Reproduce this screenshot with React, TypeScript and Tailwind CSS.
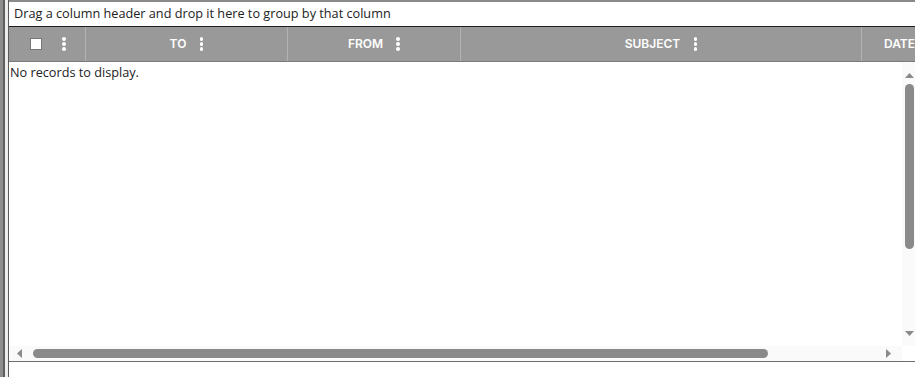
import React from "react";

const Kebab: React.FC = () => (
  <span className="flex flex-col items-center justify-center gap-[1.5px] w-[4px]">
    <span className="w-[3.5px] h-[3.5px] rounded-full bg-white" />
    <span className="w-[3.5px] h-[3.5px] rounded-full bg-white" />
    <span className="w-[3.5px] h-[3.5px] rounded-full bg-white" />
  </span>
);

const columns = [
  { label: "TO", width: "w-[202px]" },
  { label: "FROM", width: "w-[173px]" },
  { label: "SUBJECT", width: "w-[401px]" },
];

const App: React.FC = () => {
  return (
    <div className="w-[915px] h-[377px] bg-white flex overflow-hidden font-['Inter',sans-serif]">
      {/* Left frame strip */}
      <div className="flex shrink-0 h-full">
        <div className="w-[3px] bg-[#8c8c8c]" />
        <div className="w-[2px] bg-[#5e5e5e]" />
        <div className="w-[3px] bg-[#ececec]" />
        <div className="w-[1px] bg-[#5a5a5a]" />
      </div>

      {/* Grid */}
      <div className="flex-1 min-w-0 flex flex-col">
        <div className="h-[2px] bg-[#8a8a8a]" />

        {/* Group panel */}
        <div className="h-[25px] flex items-center pl-[5px] text-[12.7px] text-[#222] border-b border-[#1e1e1e] bg-white font-['Open_Sans',sans-serif]">
          Drag a column header and drop it here to group by that column
        </div>

        {/* Header */}
        <div className="h-[35px] flex bg-[#999999] border-b border-[#7b7b7b] text-white text-[12px] font-semibold whitespace-nowrap">
          <div className="w-[77px] shrink-0 flex items-center gap-[20px] pl-[21px] border-r border-[#b3b3b3]">
            <span className="w-[12px] h-[12px] bg-white border border-[#777]" />
            <Kebab />
          </div>
          {columns.map((c) => (
            <div
              key={c.label}
              className={`${c.width} shrink-0 flex items-center justify-center gap-[13px] border-r border-[#b3b3b3]`}
            >
              <span>{c.label}</span>
              <Kebab />
            </div>
          ))}
          <div className="w-[90px] shrink-0 flex items-center gap-[13px] pl-[22px]">
            <span>DATE</span>
            <Kebab />
          </div>
        </div>

        {/* Body */}
        <div className="h-[284px] flex">
          <div className="flex-1 min-w-0 pl-[1px] pt-[1px] text-[12.7px] text-[#222] font-['Open_Sans',sans-serif]">
            No records to display.
          </div>
          <div className="w-[13px] shrink-0 bg-[#fafafa] flex flex-col items-center pt-[11px]">
            <svg width="9" height="5" viewBox="0 0 9 5" className="ml-[1px]">
              <polygon points="0,5 4.5,0 9,5" fill="#8a8a8a" />
            </svg>
            <div className="w-[9px] h-[165px] mt-[6px] ml-[1px] rounded-full bg-[#8a8a8a]" />
            <div className="flex-1" />
            <svg width="9" height="5" viewBox="0 0 9 5" className="ml-[1px] mb-[10px]">
              <polygon points="0,0 9,0 4.5,5" fill="#8a8a8a" />
            </svg>
          </div>
        </div>

        {/* Horizontal scrollbar */}
        <div className="h-[16px] flex border-b border-[#6e6e6e]">
          <div className="flex-1 bg-[#fafafa] flex items-center pl-[8px]">
            <svg width="5" height="9" viewBox="0 0 5 9">
              <polygon points="5,0 0,4.5 5,9" fill="#8a8a8a" />
            </svg>
            <div className="w-[735px] h-[9px] ml-[11px] rounded-full bg-[#8a8a8a]" />
            <div className="flex-1" />
            <svg width="5" height="9" viewBox="0 0 5 9" className="mr-[11px]">
              <polygon points="0,0 5,4.5 0,9" fill="#8a8a8a" />
            </svg>
          </div>
          <div className="w-[13px] bg-white" />
        </div>
      </div>
    </div>
  );
};

export default App;
